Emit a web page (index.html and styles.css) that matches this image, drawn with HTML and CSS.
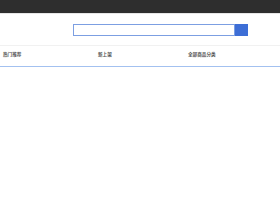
FILE: index.html
```html
<!DOCTYPE html>
<html lang="zh">
<head>
    <meta charset="UTF-8">
    <meta name="viewport" content="width=device-width, initial-scale=1.0">
    <title>搜索</title>
    <link rel="stylesheet" href="styles.css">
</head>
<body>
    <div class="topbar"></div>

    <div class="search-row">
        <form class="search-form" onsubmit="return false">
            <input type="text" class="search-input">
            <button type="submit" class="search-btn"></button>
        </form>
    </div>

    <div class="tabs">
        <span class="tab">热门推荐</span>
        <span class="tab">新上架</span>
        <span class="tab">全部商品分类</span>
    </div>
</body>
</html>
```

FILE: styles.css
```css
body {
    font-family: "Liberation Sans", "Noto Sans CJK SC", sans-serif;
    background-color: #fff;
    margin: 0;
}

.topbar {
    height: 13px;
    background-color: #2e2e2e;
    border-bottom: 1px solid #e6e6e6;
}

.search-row {
    padding: 10px 0 9px 73px;
    border-bottom: 1px solid #f1f1f1;
}

.search-form {
    display: flex;
    margin: 0;
}

.search-input {
    box-sizing: border-box;
    width: 162px;
    height: 12px;
    margin: 0;
    padding: 0;
    border: 1px solid #7c9fe2;
    outline: none;
}

.search-btn {
    width: 13px;
    height: 12px;
    margin: 0;
    padding: 0;
    border: none;
    background-color: #3d6ed6;
}

.tabs {
    display: grid;
    grid-template-columns: 95px 90px 1fr;
    padding: 6px 0 8px 3px;
    border-bottom: 1px solid #a3c1f0;
}

.tab {
    font-size: 4.6px;
    font-weight: bold;
    line-height: 6px;
    color: #555;
}
```
